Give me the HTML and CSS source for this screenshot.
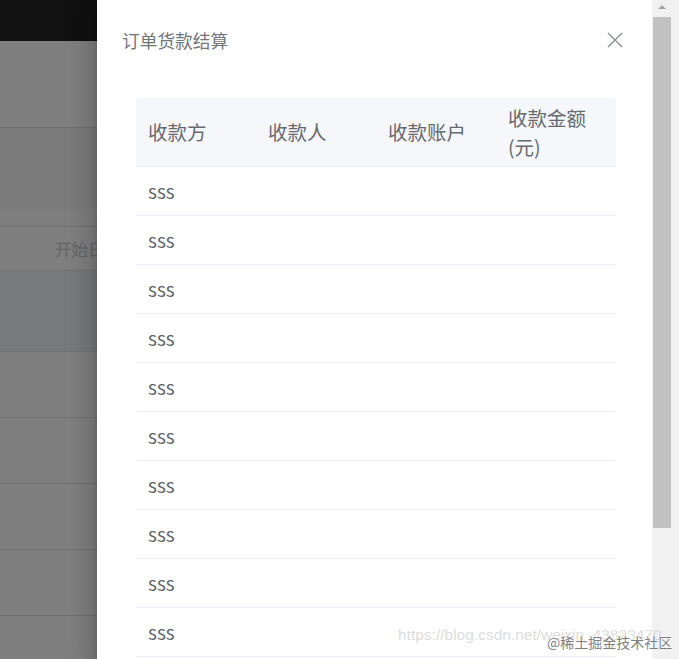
FILE: index.html
```html
<!DOCTYPE html>
<html lang="zh-CN">
<head>
<meta charset="utf-8">
<title>订单货款结算</title>
<link rel="stylesheet" href="styles.css">
</head>
<body>
<div class="app">
  <div class="viewport">
    <div class="page">
      <div class="topbar"></div>
      <div class="block-a"></div>
      <div class="block-b"></div>
      <div class="block-c"></div>
      <div class="filter-row"><span class="placeholder">开始日期</span></div>
      <div class="block-d"></div>
      <div class="list-row"></div>
      <div class="list-row"></div>
      <div class="list-row"></div>
      <div class="list-row"></div>
      <div class="list-row"></div>
    </div>
    <div class="mask"></div>
    <aside class="drawer">
      <header class="drawer-header">
        <span class="drawer-title">订单货款结算</span>
        <button class="drawer-close" aria-label="关闭">
          <svg width="16" height="16" viewBox="0 0 16 16"><path d="M1 1 L15 15 M15 1 L1 15" stroke="#8a8d93" stroke-width="1.4" fill="none"/></svg>
        </button>
      </header>
      <div class="drawer-body">
        <table class="pay-table">
          <thead>
            <tr><th>收款方</th><th>收款人</th><th>收款账户</th><th>收款金额(元)</th></tr>
          </thead>
          <tbody>
            <tr><td>sss</td><td></td><td></td><td></td></tr>
            <tr><td>sss</td><td></td><td></td><td></td></tr>
            <tr><td>sss</td><td></td><td></td><td></td></tr>
            <tr><td>sss</td><td></td><td></td><td></td></tr>
            <tr><td>sss</td><td></td><td></td><td></td></tr>
            <tr><td>sss</td><td></td><td></td><td></td></tr>
            <tr><td>sss</td><td></td><td></td><td></td></tr>
            <tr><td>sss</td><td></td><td></td><td></td></tr>
            <tr><td>sss</td><td></td><td></td><td></td></tr>
            <tr><td>sss</td><td></td><td></td><td></td></tr>
          </tbody>
        </table>
      </div>
    </aside>
  </div>
  <div class="scrollbar">
    <div class="sb-arrow"></div>
    <div class="sb-thumb"></div>
  </div>
  <div class="watermark">
    <span class="wm-url">https://blog.csdn.net/weixin_43823470</span>
    <span class="wm-site">@稀土掘金技术社区</span>
  </div>
</div>
</body>
</html>
```

FILE: styles.css
```css
html, body {
  margin: 0;
  padding: 0;
  width: 679px;
  height: 659px;
  overflow: hidden;
  font-family: "Noto Sans CJK SC", "Noto Sans", sans-serif;
}

.app {
  position: relative;
  display: flex;
  width: 679px;
  height: 659px;
}

.viewport {
  position: relative;
  flex: 0 0 652px;
  height: 659px;
  overflow: hidden;
}

/* background page (under the mask) */
.page {
  display: flex;
  flex-direction: column;
  background: #fff;
  height: 100%;
}
.topbar { height: 41px; background: #222; flex: none; }
.block-a { height: 86px; background: #fff; border-bottom: 1px solid #e2e4e8; flex: none; }
.block-b { height: 81px; background: #f7f7f7; flex: none; }
.block-c { height: 17px; background: #fcfcfc; border-bottom: 1px solid #e2e4e8; flex: none; }
.filter-row {
  height: 43px;
  border-bottom: 1px solid #e2e4e8;
  display: flex;
  align-items: center;
  padding-left: 55px;
  flex: none;
}
.placeholder { font-size: 16.5px; color: #c8cace; }
.block-d { height: 80px; background: #eef3f7; border-bottom: 1px solid #e2e4e8; flex: none; }
.list-row { height: 65px; border-bottom: 1px solid #e2e4e8; flex: none; }

.mask {
  position: absolute;
  inset: 0;
  background: rgba(0, 0, 0, 0.5);
}

/* drawer */
.drawer {
  position: absolute;
  top: 0;
  bottom: 0;
  left: 97px;
  right: 0;
  background: #fff;
  box-shadow: 0 8px 10px -5px rgba(0,0,0,.2), 0 16px 24px 2px rgba(0,0,0,.14), 0 6px 30px 5px rgba(0,0,0,.12);
  display: flex;
  flex-direction: column;
}

.drawer-header {
  display: flex;
  align-items: center;
  justify-content: space-between;
  padding: 28px 29px 0 25px;
  height: 24px;
}
.drawer-title {
  font-size: 17.7px;
  line-height: 24px;
  color: #72767b;
}
.drawer-close {
  border: 0;
  background: none;
  padding: 0;
  width: 16px;
  height: 16px;
  display: flex;
}

.drawer-body {
  padding: 46px 0 0 39px;
}

.pay-table {
  border-collapse: collapse;
  table-layout: fixed;
  width: 480px;
  color: #606266;
}
.pay-table th, .pay-table td {
  width: 120px;
  box-sizing: border-box;
  padding: 0 12px;
  text-align: left;
  vertical-align: middle;
  border-bottom: 1px solid #ebeef5;
}
.pay-table th {
  background: #f5f7fa;
  height: 68px;
  font-weight: normal;
  font-size: 19.5px;
  line-height: 29px;
  color: #67696e;
}
.pay-table td {
  height: 49px;
  font-size: 19px;
  line-height: 24px;
}

/* fake window scrollbar */
.scrollbar {
  flex: 0 0 27px;
  background: #f1f1f1;
  display: flex;
  flex-direction: column;
  align-items: flex-start;
}
.sb-arrow {
  margin: 5px 0 0 6px;
  width: 0;
  height: 0;
  border-left: 4px solid transparent;
  border-right: 4px solid transparent;
  border-bottom: 4px solid #a3a3a3;
}
.sb-thumb {
  margin: 8px 0 0 1px;
  width: 18px;
  height: 511px;
  background: #c1c1c1;
}

/* watermark */
.watermark {
  position: absolute;
  left: 398px;
  top: 626px;
  width: 281px;
  height: 30px;
}
.wm-url {
  position: absolute;
  left: 0;
  top: 0;
  font-family: "Liberation Sans", Arial, sans-serif;
  font-size: 15.5px;
  color: rgba(205, 205, 205, 0.7);
  white-space: nowrap;
}
.wm-site {
  position: absolute;
  left: 149px;
  top: 7px;
  font-size: 14px;
  line-height: 18px;
  color: #7f7f7f;
  white-space: nowrap;
  text-shadow: 0 0 2px #fff, 0 0 2px #fff;
}
```
